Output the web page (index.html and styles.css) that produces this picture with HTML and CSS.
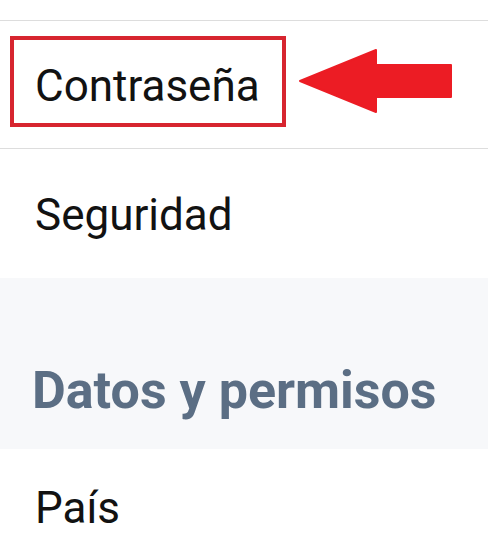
FILE: index.html
```html
<!DOCTYPE html>
<html lang="es">
<head>
<meta charset="utf-8">
<title>Ajustes</title>
<link rel="stylesheet" href="styles.css">
</head>
<body>
<div class="list">
  <div class="row row-top"></div>
  <div class="row row-highlight">
    <div class="mark-box"><span class="label">Contraseña</span></div>
    <svg class="arrow" width="160" height="70" viewBox="296 46 160 70" aria-hidden="true">
      <path d="M300 81 L376 50 L376 65 L451 65 L451 97 L376 97 L376 112 Z" fill="#ec1c24" stroke="#ec1c24" stroke-width="2" stroke-linejoin="round"/>
    </svg>
  </div>
  <div class="row row-plain"><span class="label">Seguridad</span></div>
  <div class="section-head"><span class="head-text">Datos y permisos</span></div>
  <div class="row row-last"><span class="label">País</span></div>
</div>
</body>
</html>
```
FILE: styles.css
```css
html, body {
  margin: 0;
  padding: 0;
  background: #ffffff;
}
body {
  font-family: Roboto, "Noto Sans", "Liberation Sans", sans-serif;
  color: #121212;
  width: 488px;
  height: 539px;
  overflow: hidden;
}
.list {
  display: flex;
  flex-direction: column;
}
.row {
  box-sizing: border-box;
  position: relative;
}
.row-top {
  height: 21px;
  border-bottom: 1px solid #dddddd;
}
.row-highlight {
  height: 128px;
  padding: 15px 0 0 10px;
  border-bottom: 1px solid #dddddd;
}
.mark-box {
  box-sizing: border-box;
  width: 276px;
  height: 91px;
  border: 4px solid #d7252f;
  padding: 20px 0 0 21px;
}
.label {
  display: block;
  font-size: 44px;
  line-height: 52px;
  font-weight: 400;
}
.row-plain {
  height: 129px;
  padding: 40px 0 0 35px;
}
.arrow {
  position: absolute;
  left: 296px;
  top: 25px;
}
.section-head {
  box-sizing: border-box;
  height: 171px;
  background: #f7f8fa;
  padding: 83px 0 0 32px;
}
.head-text {
  display: block;
  font-size: 52px;
  line-height: 60px;
  font-weight: 700;
  color: #5b6e84;
}
.row-last {
  padding: 33px 0 0 35px;
}
```
